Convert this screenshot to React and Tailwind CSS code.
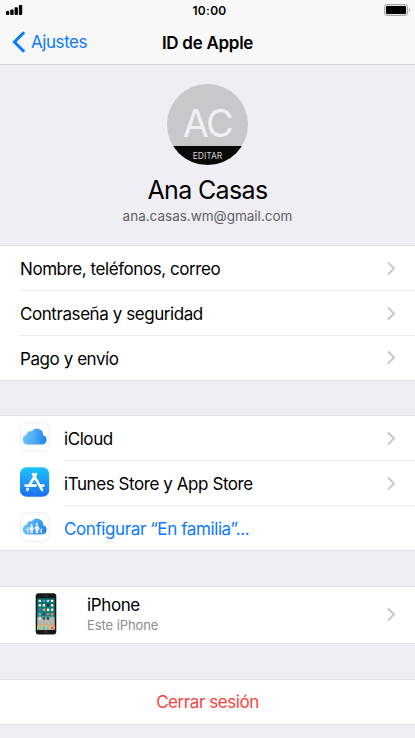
const accountRows = ["Nombre, teléfonos, correo", "Contraseña y seguridad", "Pago y envío"];

const appColors = [
  "#eef4f6", "#3b9cf0", "#b9d7e8", "#f4f4f4",
  "#e9f0f3", "#ffffff", "#26302f", "#e3efe4",
  "#3578e5", "#f3a33b", "#f5f5f5", "#e8e8ec",
  "#8cb3bd", "#3c4344", "#e65cc0", "#f28a4a",
  "#e9e9e9", "#4a4a4a", "#383838", "#b5b5b5",
];

function Chevron() {
  return (
    <svg className="absolute right-[19px] top-1/2 -mt-2" width="10" height="15" viewBox="0 0 10 15" fill="none">
      <path d="M2 1.5l6 6-6 6" stroke="#c7c7cc" strokeWidth="2" />
    </svg>
  );
}

function Group({ children }) {
  return <div className="border-t border-[#e1e1e5] bg-white">{children}</div>;
}

function Row({ label, icon, link, last }) {
  return (
    <div className={`relative flex h-[45px] ${last ? "border-b border-[#e1e1e5]" : ""}`}>
      {icon && <div className="ml-5 mt-[6px] w-11 shrink-0">{icon}</div>}
      <div
        className={`flex flex-1 items-center pt-[3px] text-[17px] ${icon ? "" : "ml-5"} ${
          last ? "" : "border-b border-[#ebebed]"
        } ${link ? "tracking-[-0.4px] text-[#0a7aff]" : "tracking-[-0.43px] text-black"}`}
      >
        {label}
      </div>
      {!link && <Chevron />}
    </div>
  );
}

const cloudPath = "M7.6 22.4a4.9 4.9 0 0 1-.9-9.7 3.9 3.9 0 0 1 5-3.4 6.3 6.3 0 0 1 11.5 3.9 4.7 4.7 0 0 1-.9 9.2z";

function CloudIcon({ family }) {
  const id = family ? "family" : "cloud";
  return (
    <svg width="30" height="30" viewBox="0 0 30 30">
      <defs>
        <linearGradient id={id} x1="0" y1="0.4" x2="1" y2="0.6">
          <stop offset="0" stopColor="#6fc6f9" />
          <stop offset="0.55" stopColor="#46a0f2" />
          <stop offset="1" stopColor="#2186ef" />
        </linearGradient>
      </defs>
      <rect x="0.5" y="0.8" width="28.5" height="28.5" rx="6" fill="#fff" stroke="#ededf0" />
      <path d={cloudPath} fill={`url(#${id})`} />
      {!family && <path d="M6.7 12.7a3.9 3.9 0 0 1 6.4-2.7c1.8 1.3 1.3 3.2 2.2 4.8s3 4.8 8 7.4H7.6a4.9 4.9 0 0 1-.9-9.5z" fill="#6cc6fa" opacity=".2" />}
      {family && (
        <g stroke="#fff" fill="#fff" strokeLinecap="round">
          <circle cx="11.6" cy="12.9" r="1" stroke="none" />
          <path d="M11.6 14.9v3M10.9 17.5v3.3M12.3 17.5v3.3M10.8 15l-.9 2M12.4 15l.9 2" strokeWidth="1.1" />
          <circle cx="17" cy="11.9" r="1.1" stroke="none" />
          <path d="M17 14.1v3.4M16.3 17v3.8M17.7 17v3.8M16.1 14.2l-.9 2.5M17.9 14.2l1 2.7" strokeWidth="1.1" />
          <circle cx="7.9" cy="16" r="0.8" stroke="none" />
          <path d="M7.9 17.8v3M7.2 17.8l-.9-.7M8.6 17.8l.8-.7" strokeWidth="1" />
          <circle cx="21.4" cy="17.3" r="0.8" stroke="none" />
          <path d="M21.4 18.9v2M20.6 18.9l-.8-.6" strokeWidth="1" />
        </g>
      )}
    </svg>
  );
}

function StoreIcon() {
  return (
    <svg width="30" height="30" viewBox="0 0 30 30">
      <defs>
        <linearGradient id="store" x1="0" y1="0" x2="0" y2="1">
          <stop offset="0" stopColor="#1cc3fb" />
          <stop offset="1" stopColor="#1d6ff2" />
        </linearGradient>
      </defs>
      <rect y="0.3" width="29.2" height="29.4" rx="6.5" fill="url(#store)" />
      <g stroke="#fff" strokeWidth="2.6" strokeLinecap="round" fill="none">
        <path d="M16 7L9.6 18M7.8 21.9l-.5.9M13 7l9 15.8M5.6 18.6h9.9M20.4 18.6h3" />
      </g>
    </svg>
  );
}

function PhoneIcon() {
  return (
    <svg width="22" height="42" viewBox="0 0 22 42">
      <defs>
        <linearGradient id="wallpaper" x1="0" y1="0" x2="0" y2="1">
          <stop offset="0" stopColor="#08675f" />
          <stop offset="0.55" stopColor="#168a80" />
          <stop offset="0.65" stopColor="#a7bbb8" />
          <stop offset="0.8" stopColor="#b9b4ac" />
          <stop offset="0.86" stopColor="#d6a66b" />
          <stop offset="1" stopColor="#bf9667" />
        </linearGradient>
      </defs>
      <rect x="0.7" y="0.3" width="20.6" height="41.3" rx="3" fill="#151719" />
      <rect x="2.2" y="5.2" width="17.5" height="31.5" fill="url(#wallpaper)" />
      {appColors.map((color, i) => (
        <rect key={i} x={3.6 + (i % 4) * 4.1} y={6.7 + Math.floor(i / 4) * 4.4} width="2.4" height="2.4" rx="0.6" fill={color} />
      ))}
      <rect x="2.2" y="32.7" width="17.5" height="4" fill="#d8c7b0" />
      <rect x="3.5" y="33.4" width="2.6" height="2.6" rx="0.6" fill="#59d956" />
      <rect x="7.6" y="33.4" width="2.6" height="2.6" rx="0.6" fill="#4caef5" />
      <rect x="11.7" y="33.4" width="2.6" height="2.6" rx="0.6" fill="#63dc5b" />
      <rect x="15.8" y="33.4" width="2.6" height="2.6" rx="0.6" fill="#f14d63" />
      <path d="M9.2 2.9h3.6" stroke="#42464a" strokeWidth="0.7" />
      <circle cx="11" cy="39.1" r="1.3" fill="none" stroke="#44474a" strokeWidth="0.6" />
    </svg>
  );
}

function StatusBar() {
  return (
    <div className="relative flex h-5 items-center justify-center">
      <svg className="absolute left-[6px] top-[5px]" width="17" height="10" viewBox="0 0 17 10">
        <rect x="0" y="6" width="3.3" height="4" rx="0.7" />
        <rect x="4.3" y="4.5" width="3.3" height="5.5" rx="0.7" />
        <rect x="8.6" y="2.2" width="3.3" height="7.8" rx="0.7" />
        <rect x="12.9" y="0" width="3.3" height="10" rx="0.7" />
      </svg>
      <span className="ml-1 pt-px text-xs font-semibold tracking-[0.3px]">10:00</span>
      <svg className="absolute right-[4px] top-[4px]" width="27" height="12" viewBox="0 0 27 12">
        <rect x="0.5" y="0.5" width="23" height="11" rx="2.5" fill="#e6e6e6" stroke="#a8a8a8" />
        <rect x="2" y="2" width="20" height="8" rx="1.2" />
        <path d="M24.8 4v4c1.3-.5 1.3-3.5 0-4z" fill="#a0a0a0" />
      </svg>
    </div>
  );
}

export default function App() {
  return (
    <div className="h-[738px] w-[415px] overflow-hidden bg-[#efeef4] font-['Inter',sans-serif] text-black">
      <header className="h-[65px] border-b border-[#d4d4da] bg-[#f8f8f8]">
        <StatusBar />
        <div className="relative flex h-11 items-center justify-center">
          <div className="absolute left-3 top-[11px] flex items-center text-[#0a7aff]">
            <svg width="14" height="22" viewBox="0 0 14 22" fill="none">
              <path d="M12.2 1.2L2.4 11l9.8 9.8" stroke="currentColor" strokeWidth="3" />
            </svg>
            <span className="ml-[5px] text-[17px] leading-[22px] tracking-[-0.43px]">Ajustes</span>
          </div>
          <h1 className="pt-[3px] text-[17px] font-semibold tracking-[-0.28px]">ID de Apple</h1>
        </div>
      </header>

      <div className="flex h-[180px] flex-col items-center pt-[19px]">
        <div className="flex size-[81px] flex-col overflow-hidden rounded-full bg-[#c8c7cc]">
          <div className="flex h-[62px] items-end justify-center text-[38px] leading-[46px] tracking-[-1.5px] text-[#f1f0f5]">AC</div>
          <div className="flex h-[19px] justify-center bg-[#090909] text-[8.5px] leading-[20px] text-[#d0d0d0]">EDITAR</div>
        </div>
        <div className="mt-[9px] text-[25px] leading-8 tracking-[-0.63px]">Ana Casas</div>
        <div className="text-[13.5px] leading-5 text-[#5e5e62]">ana.casas.wm@gmail.com</div>
      </div>

      <Group>
        {accountRows.map((label, i) => (
          <Row key={label} label={label} last={i === 2} />
        ))}
      </Group>

      <div className="mt-[34px]">
        <Group>
          <Row label="iCloud" icon={<CloudIcon />} />
          <Row label="iTunes Store y App Store" icon={<StoreIcon />} />
          <Row label="Configurar “En familia”..." icon={<CloudIcon family />} link last />
        </Group>
      </div>

      <div className="mt-[35px]">
        <Group>
          <div className="relative flex h-[57px] border-b border-[#e6e6ea]">
            <div className="ml-[35px] mt-[6px] w-[52px]">
              <PhoneIcon />
            </div>
            <div className="pt-[7px]">
              <div className="text-[17px] leading-[22px] tracking-[-0.38px]">iPhone</div>
              <div className="-mt-px text-[13px] leading-5 tracking-[-0.08px] text-[#8b8b8f]">Este iPhone</div>
            </div>
            <Chevron />
          </div>
        </Group>
      </div>

      <div className="mt-[35px]">
        <Group>
          <div className="flex h-[45px] items-center justify-center border-b border-[#e1e1e5] pt-[2px] text-[17px] tracking-[-0.43px] text-[#fc4238]">
            Cerrar sesión
          </div>
        </Group>
      </div>
    </div>
  );
}
